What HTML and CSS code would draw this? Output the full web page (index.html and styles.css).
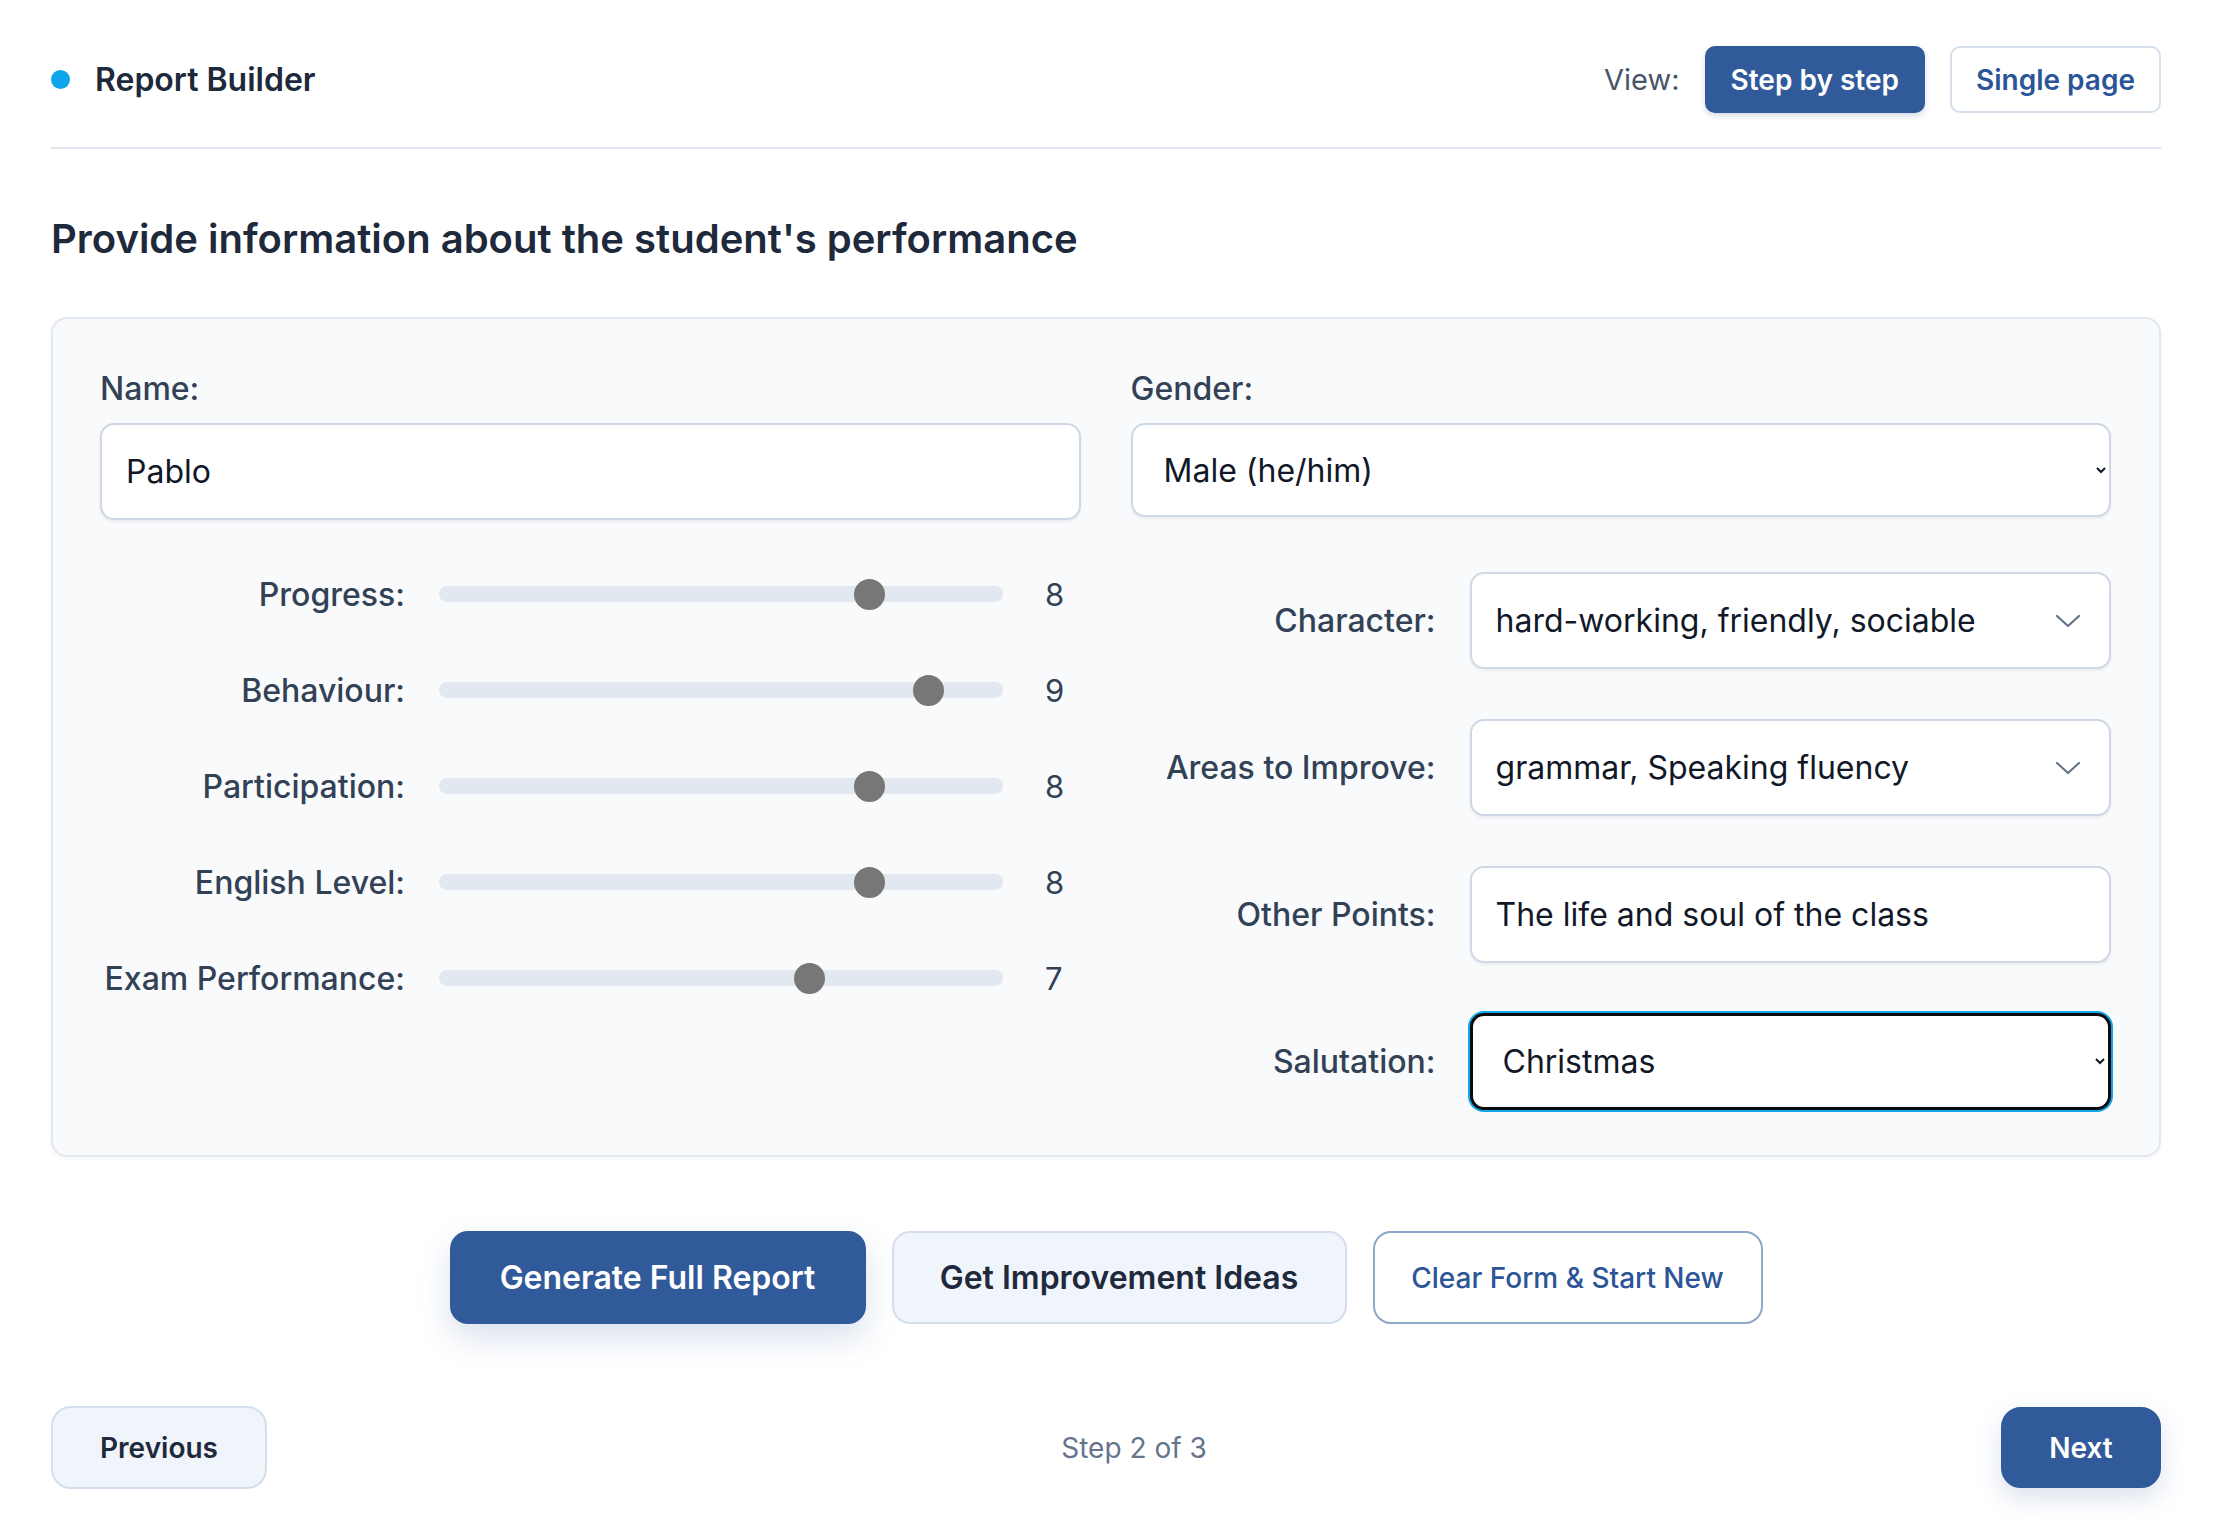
FILE: index.html
```html
<!DOCTYPE html>
<html lang="en">
<head>
<meta charset="utf-8">
<title>Report Builder</title>
<link rel="stylesheet" href="styles.css">
</head>
<body>
<header class="topbar">
  <div class="brand">
    <span class="brand-dot"></span>
    <span class="brand-name">Report Builder</span>
  </div>
  <div class="view-switch">
    <span class="view-label">View:</span>
    <button class="view-btn view-btn--active" type="button">Step by step</button>
    <button class="view-btn" type="button">Single page</button>
  </div>
</header>

<h1 class="page-title">Provide information about the student's performance</h1>

<section class="card">
  <div class="top-grid">
    <div class="field">
      <label class="field-label" for="name">Name:</label>
      <input class="text-input" id="name" type="text" value="Pablo">
    </div>
    <div class="field">
      <label class="field-label" for="gender">Gender:</label>
      <select class="select-input select-input--gender" id="gender">
        <option>Male (he/him)</option>
        <option>Female (she/her)</option>
        <option>Non-binary (they/them)</option>
      </select>
    </div>
  </div>

  <div class="bottom-grid">
    <div class="sliders">
      <div class="slider-row">
        <span class="row-label">Progress:</span>
        <input class="range" type="range" min="1" max="10" value="8">
        <span class="range-value">8</span>
      </div>
      <div class="slider-row">
        <span class="row-label">Behaviour:</span>
        <input class="range" type="range" min="1" max="10" value="9">
        <span class="range-value">9</span>
      </div>
      <div class="slider-row">
        <span class="row-label">Participation:</span>
        <input class="range" type="range" min="1" max="10" value="8">
        <span class="range-value">8</span>
      </div>
      <div class="slider-row">
        <span class="row-label">English Level:</span>
        <input class="range" type="range" min="1" max="10" value="8">
        <span class="range-value">8</span>
      </div>
      <div class="slider-row">
        <span class="row-label">Exam Performance:</span>
        <input class="range" type="range" min="1" max="10" value="7">
        <span class="range-value">7</span>
      </div>
    </div>

    <div class="details">
      <div class="detail-row">
        <span class="row-label">Character:</span>
        <div class="multi-select">
          <span class="multi-text">hard-working, friendly, sociable</span>
          <svg class="chevron" width="28" height="16" viewBox="0 0 28 16" aria-hidden="true"><path d="M3 3 L14 13 L25 3" fill="none" stroke="#64748b" stroke-width="2.2" stroke-linecap="round" stroke-linejoin="round"/></svg>
        </div>
      </div>
      <div class="detail-row">
        <span class="row-label">Areas to Improve:</span>
        <div class="multi-select">
          <span class="multi-text">grammar, Speaking fluency</span>
          <svg class="chevron" width="28" height="16" viewBox="0 0 28 16" aria-hidden="true"><path d="M3 3 L14 13 L25 3" fill="none" stroke="#64748b" stroke-width="2.2" stroke-linecap="round" stroke-linejoin="round"/></svg>
        </div>
      </div>
      <div class="detail-row">
        <span class="row-label">Other Points:</span>
        <input class="text-input" type="text" value="The life and soul of the class">
      </div>
      <div class="detail-row">
        <span class="row-label">Salutation:</span>
        <select class="select-input select-input--focused">
          <option>Christmas</option>
          <option>End of term</option>
          <option>Summer</option>
        </select>
      </div>
    </div>
  </div>
</section>

<div class="actions">
  <button class="btn btn--primary" type="button">Generate Full Report</button>
  <button class="btn btn--soft" type="button">Get Improvement Ideas</button>
  <button class="btn btn--outline" type="button">Clear Form &amp; Start New</button>
</div>

<nav class="stepper">
  <button class="step-btn step-btn--prev" type="button">Previous</button>
  <span class="step-count">Step 2 of 3</span>
  <button class="step-btn step-btn--next" type="button">Next</button>
</nav>
</body>
</html>
```
FILE: styles.css
```css
* { box-sizing: border-box; }

html, body { background: #ffffff; }

body {
  margin: 0;
  padding: 46px 52px 36px 51px;
  font-family: Inter, "Noto Sans", "Liberation Sans", sans-serif;
  color: #1e293b;
}

/* Header */
.topbar {
  display: flex;
  justify-content: space-between;
  align-items: center;
  padding-bottom: 34px;
  border-bottom: 2px solid #e2e8f0;
}

.brand {
  display: flex;
  align-items: center;
  gap: 25px;
}

.brand-dot {
  width: 19px;
  height: 19px;
  border-radius: 50%;
  background: #0ea5e9;
}

.brand-name {
  font-size: 32px;
  font-weight: 600;
  color: #1e293b;
}

.view-switch {
  display: flex;
  align-items: center;
  gap: 25px;
}

.view-label {
  font-size: 29px;
  color: #475569;
}

.view-btn {
  height: 67px;
  padding: 0 24px;
  border: 2px solid #d5deeb;
  border-radius: 10px;
  background: #ffffff;
  color: #2c5597;
  font-family: inherit;
  font-size: 28px;
  font-weight: 600;
}

.view-btn--active {
  background: #315a9a;
  border-color: #315a9a;
  color: #ffffff;
  box-shadow: 0 3px 6px rgba(30, 60, 110, 0.18);
}

/* Title */
.page-title {
  margin: 67px 0 0;
  font-size: 40px;
  line-height: 46px;
  font-weight: 600;
  color: #1e293b;
}

/* Card */
.card {
  margin-top: 55px;
  padding: 51px 48px 45px 47px;
  background: #f8fafc;
  border: 2px solid #e2e8f0;
  border-radius: 16px;
  box-shadow: 0 2px 4px rgba(15, 23, 42, 0.04);
}

.top-grid,
.bottom-grid {
  display: grid;
  grid-template-columns: 1fr 1fr;
  column-gap: 50px;
  align-items: start;
}

.bottom-grid {
  margin-top: 52px;
}

.field {
  display: flex;
  flex-direction: column;
}

.field-label {
  font-size: 32px;
  line-height: 38px;
  font-weight: 500;
  color: #334155;
  margin-bottom: 15px;
}

.text-input,
.select-input,
.multi-select {
  width: 100%;
  height: 97px;
  border: 2px solid #cfd8e5;
  border-radius: 14px;
  background: #ffffff;
  font-family: inherit;
  font-size: 32px;
  color: #111827;
  box-shadow: 0 2px 3px rgba(15, 23, 42, 0.06);
}

.text-input {
  padding: 0 24px;
  outline: none;
}

.select-input {
  padding: 0 20px 0 27px;
  outline: none;
}

.select-input--gender {
  height: 94px;
}

.select-input--focused {
  border: 3px solid #0b0b0b;
  box-shadow: 0 0 0 2px #0ea5e9;
  padding-left: 26px;
}

.multi-select {
  display: flex;
  align-items: center;
  justify-content: space-between;
  padding: 0 27px 0 24px;
}

.chevron {
  flex: none;
}

/* Sliders */
.sliders {
  display: flex;
  flex-direction: column;
  gap: 52px;
}

.slider-row {
  display: grid;
  grid-template-columns: 305px 564px 1fr;
  column-gap: 34px;
  align-items: center;
  height: 44px;
}

.row-label {
  font-size: 32px;
  font-weight: 500;
  color: #334155;
  text-align: right;
  white-space: nowrap;
}

.range-value {
  font-size: 31px;
  color: #334155;
  margin-left: 8px;
}

.range {
  -webkit-appearance: none;
  appearance: none;
  width: 100%;
  height: 32px;
  margin: 0;
  background: transparent;
}

.range::-webkit-slider-runnable-track {
  height: 16px;
  background: #e2e8f0;
  border-radius: 8px;
}

.range::-webkit-slider-thumb {
  -webkit-appearance: none;
  appearance: none;
  width: 31px;
  height: 31px;
  border-radius: 50%;
  background: #777777;
  border: none;
  margin-top: -7.5px;
}

/* Right details */
.details {
  display: flex;
  flex-direction: column;
  gap: 50px;
}

.detail-row {
  display: grid;
  grid-template-columns: 305px 1fr;
  column-gap: 34px;
  align-items: center;
}

/* Actions */
.actions {
  display: flex;
  justify-content: center;
  gap: 26px;
  margin-top: 74px;
}

.btn {
  height: 93px;
  border-radius: 18px;
  font-family: inherit;
  font-size: 32px;
  font-weight: 600;
  border: 2px solid transparent;
}

.btn--primary {
  width: 416px;
  background: #315a9a;
  border-color: #315a9a;
  color: #ffffff;
  box-shadow: 0 14px 32px rgba(49, 90, 154, 0.18);
}

.btn--soft {
  width: 455px;
  background: #f0f4fb;
  border-color: #d5deec;
  color: #1e293b;
}

.btn--outline {
  width: 390px;
  background: #ffffff;
  border-color: #8ea6c9;
  color: #2c5597;
  font-size: 28px;
  font-weight: 500;
}

/* Stepper */
.stepper {
  display: flex;
  justify-content: space-between;
  align-items: center;
  margin-top: 82px;
}

.step-btn {
  height: 83px;
  border-radius: 20px;
  font-family: inherit;
  font-size: 28px;
  font-weight: 600;
  border: 2px solid transparent;
}

.step-btn--prev {
  width: 216px;
  background: #f0f4fb;
  border-color: #d5deec;
  color: #1e293b;
}

.step-btn--next {
  width: 160px;
  height: 81px;
  background: #315a9a;
  border-color: #315a9a;
  color: #ffffff;
  box-shadow: 0 10px 26px rgba(49, 90, 154, 0.18);
}

.step-count {
  font-size: 28px;
  color: #64748b;
}
```
